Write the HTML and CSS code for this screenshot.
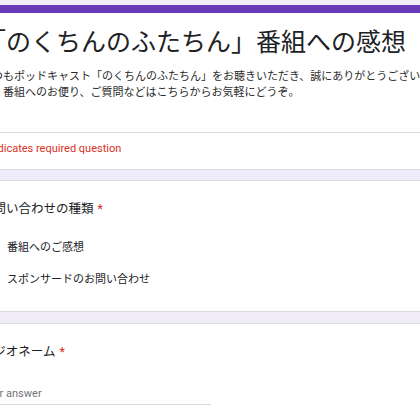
FILE: index.html
```html
<!DOCTYPE html>
<html lang="ja">
<head>
<meta charset="utf-8">
<title>「のくちんのふたちん」番組への感想</title>
<link rel="stylesheet" href="styles.css">
</head>
<body>
<main class="form">
  <section class="card header-card">
    <div class="header-main">
      <h1 class="form-title">「のくちんのふたちん」番組への感想</h1>
      <div class="form-desc">
        <div class="desc-line">いつもポッドキャスト「のくちんのふたちん」をお聴きいただき、誠にありがとうございます。</div>
        <div class="desc-line desc-indent">番組へのお便り、ご質問などはこちらからお気軽にどうぞ。</div>
      </div>
    </div>
    <div class="required-note">* Indicates required question</div>
  </section>

  <section class="card question">
    <div class="q-title">お問い合わせの種類<span class="req">*</span></div>
    <div class="options">
      <label class="option"><span class="radio"></span><span class="opt-text">番組へのご感想</span></label>
      <label class="option"><span class="radio"></span><span class="opt-text">スポンサードのお問い合わせ</span></label>
    </div>
  </section>

  <section class="card question">
    <div class="q-title">ラジオネーム<span class="req">*</span></div>
    <div class="answer">Your answer</div>
  </section>
</main>
</body>
</html>
```

FILE: styles.css
```css
html, body {
  margin: 0;
  padding: 0;
  overflow: hidden;
  background: #f0ebf8;
}
body {
  padding-top: 5px;
  font-family: Roboto, "Noto Sans CJK JP", sans-serif;
  color: #202124;
}
.form {
  width: 600px;
  margin-left: -39px;
  display: flex;
  flex-direction: column;
}
.card {
  background: #ffffff;
  border: 1px solid #dadce0;
  border-radius: 6px;
}
.header-card {
  border-top: 8px solid #673ab7;
}
.header-main {
  padding: 12px 19px 33px 19px;
  border-bottom: 1px solid #dadce0;
}
.form-title {
  margin: 0;
  font-family: "Noto Sans CJK JP", sans-serif;
  font-weight: 400;
  font-size: 25px;
  line-height: 31px;
  color: #202124;
  white-space: nowrap;
}
.form-desc {
  margin-top: 11px;
  font-family: "Noto Sans CJK JP", sans-serif;
  font-size: 11px;
  line-height: 16px;
  color: #2b2b2b;
}
.desc-line {
  white-space: nowrap;
}
.desc-indent {
  padding-left: 22px;
}
.required-note {
  padding: 8px 19px 12px 19px;
  font-size: 11px;
  line-height: 16px;
  color: #d93025;
}
.question {
  margin-top: 10px;
  padding: 17px 19px 17px 19px;
}
.question + .question {
  margin-top: 11px;
}
.q-title {
  font-family: "Noto Sans CJK JP", sans-serif;
  font-size: 12.5px;
  line-height: 19px;
  color: #202124;
}
.req {
  color: #d93025;
  margin-left: 4px;
  font-family: Roboto, sans-serif;
}
.options {
  margin-top: 12px;
  display: flex;
  flex-direction: column;
}
.option {
  height: 32px;
  display: flex;
  align-items: center;
  gap: 11px;
}
.radio {
  width: 11px;
  height: 11px;
  border: 2px solid #5f6368;
  border-radius: 50%;
  flex: none;
}
.opt-text {
  font-family: "Noto Sans CJK JP", sans-serif;
  font-size: 11px;
  line-height: 16px;
  color: #202124;
}
.answer {
  margin-top: 25px;
  width: 230px;
  padding-bottom: 2px;
  border-bottom: 1px solid #dadce0;
  font-size: 11px;
  line-height: 16px;
  color: #70757a;
}
```
